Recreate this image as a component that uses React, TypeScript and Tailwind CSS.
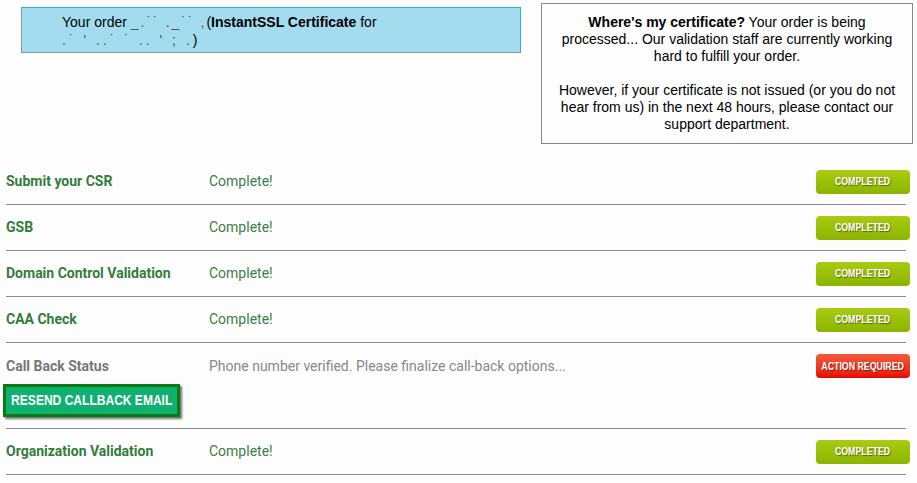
const steps = [
  { label: "Submit your CSR", status: "Complete!" },
  { label: "GSB", status: "Complete!" },
  { label: "Domain Control Validation", status: "Complete!" },
  { label: "CAA Check", status: "Complete!" },
];

const CompletedBadge = () => (
  <div className="w-[94px] h-[24px] -mr-[4px] rounded-[4px] bg-gradient-to-b from-[#a9cc12] to-[#8cb400] flex items-center justify-center whitespace-nowrap text-white text-[11px] font-bold font-['Liberation_Sans',Arial,sans-serif] [text-shadow:1px_1px_1px_rgba(0,0,0,0.45)]">
    <span className="inline-block scale-x-[0.8]">COMPLETED</span>
  </div>
);

const ActionBadge = () => (
  <div className="w-[94px] h-[24px] -mr-[4px] rounded-[4px] bg-gradient-to-b from-[#f25a3a] to-[#e60000] flex items-center justify-center whitespace-nowrap text-white text-[11px] font-bold font-['Liberation_Sans',Arial,sans-serif] [text-shadow:1px_1px_1px_rgba(0,0,0,0.45)]">
    <span className="inline-block scale-x-[0.8]">ACTION REQUIRED</span>
  </div>
);

const StepRow = ({ label, status }: { label: string; status: string }) => (
  <div className="flex items-center h-[46px] border-b border-[#8c8c8c]">
    <div className="w-[203px] text-[14px] font-bold text-[#327c3c]">{label}</div>
    <div className="flex-1 text-[14px] text-[#3b7f45]">{status}</div>
    <CompletedBadge />
  </div>
);

export default function App() {
  return (
    <div className="w-[917px] h-[483px] bg-[#fdfdfd] overflow-hidden">
      <div className="flex items-start pt-[3px] pl-[21px] gap-[20px]">
        <div className="mt-[4px] w-[500px] h-[46px] bg-[#a3dcee] border border-t-[#2fb3d6] border-r-[#2fb3d6] border-l-[#7f9aa6] border-b-[#7f9aa6] pl-[40px] pt-[5px] text-[14px] leading-[18px] text-black font-['Liberation_Sans',Arial,sans-serif]">
          Your order <span className="text-[#555] tracking-[2px]">_.˙˙ ._˙˙ ,</span>(
          <b>InstantSSL Certificate</b> for
          <br />
          <span className="text-[#555] tracking-[3px]">.˙ ' ..˙ ˙ .. ' ; .</span>)
        </div>
        <div className="w-[372px] border border-[#888] pt-[10px] pb-[10px] text-center text-[14px] leading-[17px] text-black font-['Liberation_Sans',Arial,sans-serif]">
          <b>Where's my certificate?</b> Your order is being
          <br />
          processed... Our validation staff are currently working
          <br />
          hard to fulfill your order.
          <br />
          <br />
          However, if your certificate is not issued (or you do not
          <br />
          hear from us) in the next 48 hours, please contact our
          <br />
          support department.
        </div>
      </div>

      <div className="mt-[15px] ml-[6px] w-[900px] font-['Roboto',sans-serif]">
        {steps.map((s) => (
          <StepRow key={s.label} label={s.label} status={s.status} />
        ))}

        <div className="border-b border-[#8c8c8c] pb-[11px]">
          <div className="flex items-center h-[46px]">
            <div className="w-[203px] text-[14px] font-bold text-[#777]">Call Back Status</div>
            <div className="flex-1 text-[14px] text-[#888]">
              Phone number verified. Please finalize call-back options...
            </div>
            <ActionBadge />
          </div>
          <button className="-ml-[3px] -mt-[5px] h-[33px] w-[177px] border-[3px] border-[#0a7a12] bg-[#0fb070] shadow-[2px_2px_2px_rgba(0,0,0,0.55)] text-white text-[14px] font-bold font-['Liberation_Sans',Arial,sans-serif] flex items-center justify-center whitespace-nowrap overflow-hidden">
            <span className="inline-block scale-x-[0.86]">RESEND CALLBACK EMAIL</span>
          </button>
        </div>

        <StepRow label="Organization Validation" status="Complete!" />
      </div>
    </div>
  );
}
